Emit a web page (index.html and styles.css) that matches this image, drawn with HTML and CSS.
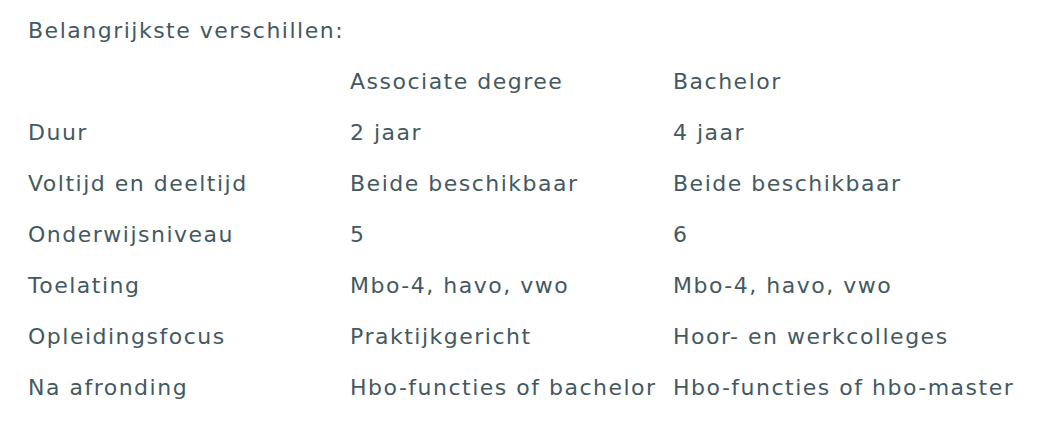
FILE: index.html
```html
<!DOCTYPE html>
<html lang="nl">
<head>
<meta charset="utf-8">
<link rel="stylesheet" href="styles.css">
</head>
<body>
<div class="page">
  <p class="title">Belangrijkste verschillen:</p>
  <div class="table">
    <div class="cell"></div><div class="cell">Associate degree</div><div class="cell">Bachelor</div>
    <div class="cell">Duur</div><div class="cell">2 jaar</div><div class="cell">4 jaar</div>
    <div class="cell">Voltijd en deeltijd</div><div class="cell">Beide beschikbaar</div><div class="cell">Beide beschikbaar</div>
    <div class="cell">Onderwijsniveau</div><div class="cell">5</div><div class="cell">6</div>
    <div class="cell">Toelating</div><div class="cell">Mbo-4, havo, vwo</div><div class="cell">Mbo-4, havo, vwo</div>
    <div class="cell">Opleidingsfocus</div><div class="cell">Praktijkgericht</div><div class="cell">Hoor- en werkcolleges</div>
    <div class="cell">Na afronding</div><div class="cell">Hbo-functies of bachelor</div><div class="cell">Hbo-functies of hbo-master</div>
  </div>
</div>
</body>
</html>
```
FILE: styles.css
```css
html, body {
  margin: 0;
  padding: 0;
  background: #ffffff;
}
.page {
  padding: 5px 0 0 28px;
  font-family: "DejaVu Sans", sans-serif;
  font-size: 22px;
  letter-spacing: 1.5px;
  color: #44595f;
}
.title {
  margin: 0;
  line-height: 51px;
}
.table {
  display: grid;
  grid-template-columns: 322px 323px auto;
}
.cell {
  line-height: 51px;
  white-space: nowrap;
}
```
